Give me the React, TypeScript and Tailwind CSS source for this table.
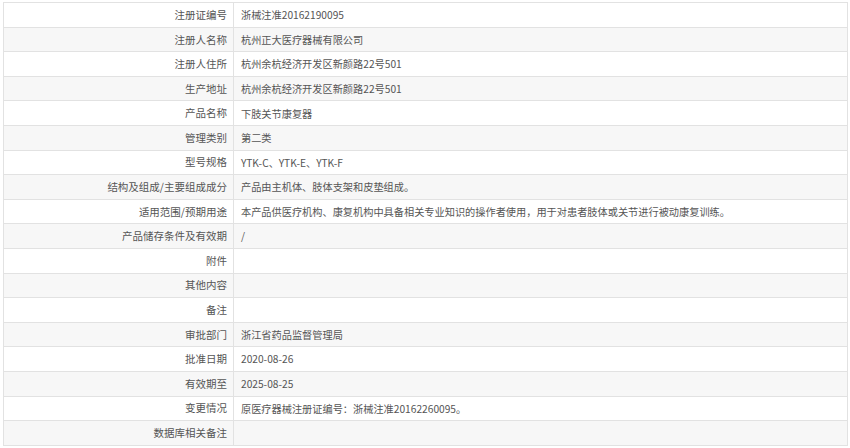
import React from 'react';

const rows: [string, string][] = [
  ['注册证编号', '浙械注准20162190095'],
  ['注册人名称', '杭州正大医疗器械有限公司'],
  ['注册人住所', '杭州余杭经济开发区新颜路22号501'],
  ['生产地址', '杭州余杭经济开发区新颜路22号501'],
  ['产品名称', '下肢关节康复器'],
  ['管理类别', '第二类'],
  ['型号规格', 'YTK-C、YTK-E、YTK-F'],
  ['结构及组成/主要组成成分', '产品由主机体、肢体支架和皮垫组成。'],
  ['适用范围/预期用途', '本产品供医疗机构、康复机构中具备相关专业知识的操作者使用，用于对患者肢体或关节进行被动康复训练。'],
  ['产品储存条件及有效期', '/'],
  ['附件', ''],
  ['其他内容', ''],
  ['备注', ''],
  ['审批部门', '浙江省药品监督管理局'],
  ['批准日期', '2020-08-26'],
  ['有效期至', '2025-08-25'],
  ['变更情况', '原医疗器械注册证编号：浙械注准20162260095。'],
  ['数据库相关备注', ''],
];

export default function App() {
  return (
    <div className="w-[850px] h-[448px] bg-white pt-[2px] pl-[3px] pr-[2px]">
      <div
        className="border-l border-t border-[#e2e2e2] text-[10.5px] text-[#555]"
        style={{ fontFamily: '"Noto Sans CJK SC", "Noto Sans", sans-serif' }}
      >
        {rows.map(([label, value], i) => (
          <div
            key={label}
            className={`flex h-[24.6px] border-b border-r border-[#e2e2e2] ${i % 2 === 1 ? 'bg-[#f7f7f7]' : 'bg-white'}`}
          >
            <div className="w-[230px] shrink-0 flex items-center justify-end pr-[6px] border-r border-[#e2e2e2]">
              {label}
            </div>
            <div className="flex-1 flex items-center pl-[7px] whitespace-nowrap text-[10.2px]">{value}</div>
          </div>
        ))}
      </div>
    </div>
  );
}
